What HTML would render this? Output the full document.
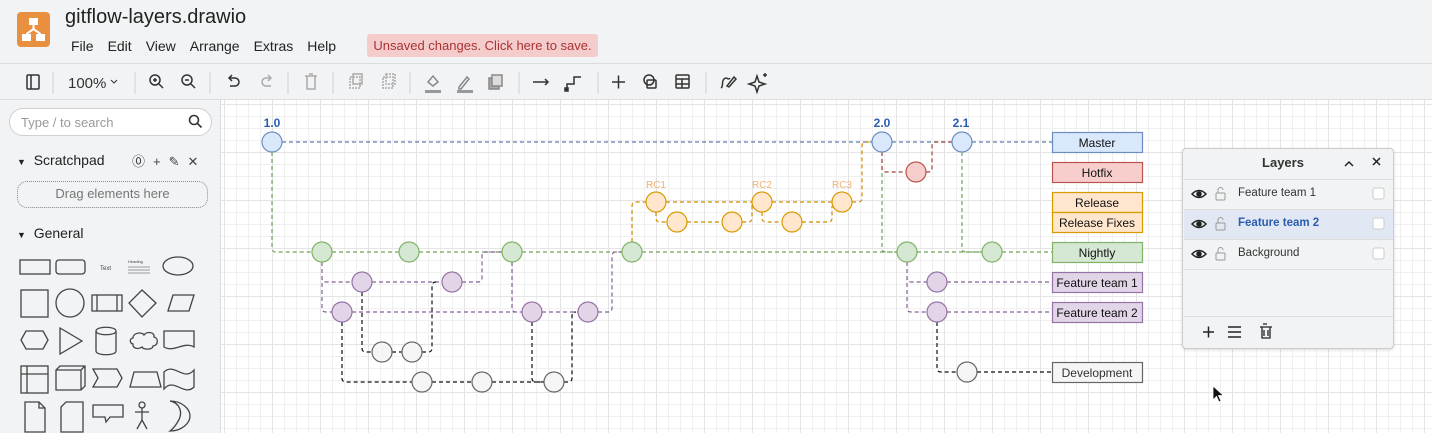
<!DOCTYPE html>
<html><head><meta charset="utf-8">
<style>
*{box-sizing:border-box;margin:0;padding:0}
body{width:1432px;height:433px;overflow:hidden;background:#f1f3f4;font-family:"Liberation Sans",sans-serif;position:relative}
.abs{position:absolute}
.menu span{margin-right:14px;font-size:14px;color:#222}
#tb{position:absolute;left:0;top:63px;width:1432px;height:37px;border-top:1px solid #dadce0;border-bottom:1px solid #dadce0;background:#f1f3f4}
#side{position:absolute;left:0;top:100px;width:221px;height:333px;background:#f1f3f4;border-right:1px solid #dadce0}
#canvas{position:absolute;left:221px;top:100px;width:1211px;height:333px;background-color:#fff;
background-image:linear-gradient(#e4e4e4 1px,transparent 1px),linear-gradient(90deg,#e4e4e4 1px,transparent 1px),linear-gradient(#f0f0f0 1px,transparent 1px),linear-gradient(90deg,#f0f0f0 1px,transparent 1px);
background-size:48px 48px,48px 48px,12px 12px,12px 12px;background-position:-5px 4px,3px 0,-5px 4px,3px 0}
</style></head><body>
<div class="abs" style="left:17px;top:12px;width:33px;height:35px;background:#e8903f;border-radius:4px">
<svg width="33" height="35" viewBox="0 0 33 35"><g fill="#fff"><rect x="12" y="6" width="9" height="7"/><rect x="5" y="22" width="9" height="7"/><rect x="19" y="22" width="9" height="7"/></g><path d="M16.5 13v4M9.5 22l7-5 7 5" stroke="#fff" stroke-width="2" fill="none"/></svg></div>
<div class="abs" style="left:65px;top:6px;font-size:20px;color:#222">gitflow-layers.drawio</div>
<div class="abs menu" style="left:71px;top:38px"><span>File</span><span>Edit</span><span>View</span><span>Arrange</span><span>Extras</span><span>Help</span></div>
<div class="abs" style="left:367px;top:34px;width:231px;height:23px;background:#f4cccc;border-radius:3px;color:#a33;font-size:13px;line-height:23px;text-align:center">Unsaved changes. Click here to save.</div>
<div id="tb">
<svg width="800" height="37" style="position:absolute;left:0;top:0" fill="none" stroke="#333" stroke-width="1.5">
<rect x="27" y="11" width="12" height="14" rx="1"/><line x1="31" y1="11" x2="31" y2="25"/>
<line x1="53" y1="8" x2="53" y2="30" stroke="#ddd"/>
<text x="68" y="24" font-size="15" fill="#333" stroke="none" font-family="Liberation Sans">100%</text><path d="M111 16l3 3 3-3" stroke-width="1"/>
<line x1="135" y1="8" x2="135" y2="30" stroke="#ddd"/>
<circle cx="155" cy="16" r="5"/><path d="M159 20l4 4M153 16h4M155 14v4"/>
<circle cx="187" cy="16" r="5"/><path d="M191 20l4 4M185 16h4"/>
<line x1="210" y1="8" x2="210" y2="30" stroke="#ddd"/>
<path d="M229 14h6a4 4 0 010 8h-5M232 11l-3 3 3 3"/>
<path d="M271 14h-5a4 4 0 000 8h5M268 11l3 3-3 3" stroke="#aaa"/>
<line x1="288" y1="8" x2="288" y2="30" stroke="#ddd"/>
<path d="M305 12h12M307 12v13h8V12M309 10h4" stroke="#aaa"/>
<line x1="333" y1="8" x2="333" y2="30" stroke="#ddd"/>
<rect x="350" y="13" width="10" height="11" stroke="#aaa" stroke-dasharray="2 1"/><rect x="353" y="10" width="9" height="10" stroke="#aaa"/>
<rect x="383" y="13" width="10" height="11" stroke="#aaa" stroke-dasharray="2 1"/><rect x="386" y="10" width="9" height="10" stroke="#aaa" stroke-dasharray="2 1"/>
<line x1="410" y1="8" x2="410" y2="30" stroke="#ddd"/>
<path d="M428 18l5-6 5 6-5 4z" stroke="#888"/><rect x="425" y="26" width="16" height="3" fill="#999" stroke="none"/>
<path d="M459 23l8-10 2 2-8 10h-2z" stroke="#888"/><rect x="457" y="26" width="16" height="3" fill="#999" stroke="none"/>
<rect x="489" y="14" width="10" height="11" fill="#aaa" stroke="#888"/><rect x="492" y="11" width="10" height="11" fill="#ddd" stroke="#888"/>
<line x1="519" y1="8" x2="519" y2="30" stroke="#ddd"/>
<path d="M533 18h15M545 15l3 3-3 3"/>
<path d="M567 25v-5h7v-7h7"/><rect x="565" y="24" width="3" height="3" fill="#333"/>
<line x1="598" y1="8" x2="598" y2="30" stroke="#ddd"/>
<path d="M612 18h13M618.5 11.5v13"/>
<circle cx="649" cy="16" r="5"/><rect x="647" y="16" width="9" height="8" rx="1"/>
<rect x="676" y="11" width="13" height="13" rx="1"/><path d="M676 15h13M676 20h13M682 15v9"/>
<line x1="706" y1="8" x2="706" y2="30" stroke="#ddd"/>
<path d="M721 24c3-2 0-6 3-9s4 2 6-1M727 22l7-9 2 2-7 8z"/>
<path d="M757 12l2 6 6 2-6 2-2 6-2-6-6-2 6-2zM765 9v4M763 11h4"/>
</svg></div>
<div id="side">
<div class="abs" style="left:9px;top:8px;width:203px;height:28px;border:1px solid #d0d0d0;border-radius:14px;background:#fff;font-size:13px;color:#999;padding:6px 0 0 11px">Type / to search</div>
<svg class="abs" style="left:188px;top:14px" width="16" height="16" fill="none" stroke="#333" stroke-width="1.6"><circle cx="6" cy="6" r="4.5"/><path d="M9.5 9.5l4 4"/></svg>
<div class="abs" style="left:17px;top:52px;font-size:14px;color:#222"><span style="font-size:9px">▼</span>&nbsp; Scratchpad</div>
<div class="abs" style="left:132px;top:51px;font-size:13px;color:#444;letter-spacing:8px">⓪+✎✕</div>
<div class="abs" style="left:17px;top:81px;width:191px;height:27px;border:1.5px dotted #888;border-radius:10px;font-size:13px;color:#777;text-align:center;line-height:24px">Drag elements here</div>
<div class="abs" style="left:17px;top:125px;font-size:14px;color:#222"><span style="font-size:9px">▼</span>&nbsp; General</div>
<svg class="abs" style="left:18px;top:155px" width="200" height="178" fill="none" stroke="#444" stroke-width="1.3">
<rect x="2" y="5" width="30" height="14"/><rect x="38" y="5" width="29" height="14" rx="3"/>
<text x="82" y="15" font-size="6" fill="#444" stroke="none">Text</text>
<text x="110" y="8" font-size="4" fill="#444" stroke="none">Heading</text><path d="M110 12h22M110 15h22M110 18h22" stroke-width=".6"/>
<ellipse cx="160" cy="11" rx="15" ry="9"/>
<rect x="3" y="35" width="27" height="27"/><circle cx="52" cy="48" r="14"/><rect x="74" y="40" width="30" height="16"/><path d="M79 40v16M99 40v16"/>
<path d="M124 35l14 13-14 14-13-14z"/><path d="M150 56l5-16h21l-5 16z"/>
<path d="M3 85l5-9h17l5 9-5 9H8z"/><path d="M42 73l22 13-22 13z"/><path d="M78 76c0-5 20-5 20 0v20c0 5-20 5-20 0zM78 76c0 5 20 5 20 0"/>
<path d="M115 83c0-6 10-6 11-3 3-4 11-3 10 2 5 1 4 9-1 9 0 4-10 4-11 1-4 3-10 1-9-3-4-1-3-6 0-6z"/><path d="M146 76h30v16c-10-6-20 6-30 0z"/>
<rect x="3" y="111" width="27" height="27"/><path d="M3 119h27M9 111v27"/><path d="M38 115l4-4h25v20l-4 4H38zM38 115h25v20M63 115l4-4"/>
<path d="M75 114h24l5 9-5 9H75l5-9z"/><path d="M112 132l4-15h23l4 15z"/><path d="M146 117c10-10 20 10 30-2v17c-10 10-20-10-30 2z"/>
<path d="M7 147h14l6 6v24H7zM21 147v6h6"/><path d="M48 147h17v30H43v-25z"/><path d="M75 150h30v12H92l-4 5-1-5H75z"/>
<circle cx="124" cy="150" r="3"/><path d="M124 153v12M117 157h14M124 165l-5 9M124 165l5 9"/>
<path d="M152 146c10 2 14 12 7 22-3 5-7 8-7 8 12 0 20-8 20-15s-8-15-20-15z"/>
</svg>
</div>
<div id="canvas"></div>
<svg class="abs" style="left:0;top:0" width="1432" height="433" font-family="Liberation Sans">
<g fill="none" stroke-width="1.2" stroke-dasharray="4 3">
<path d="M282 142H872M892 142H952M972 142H1052" stroke="#5a7ab0"/>
<path d="M272 152V248q0 4 4 4H312M332 252H399M419 252H502M522 252H622M642 252H897M917 252H982M1002 252H1052M882 152V248q0 4 4 4H897M962 152V248q0 4 4 4H982" stroke="#6fa45a"/>
<path d="M632 242V206q0-4 4-4H646M666 202H752M772 202H832M852 202H858q4 0 4-4V146q0-4 4-4H872M656 212V218q0 4 4 4H667M687 222H722M742 222H748q4 0 4-4V206q0-4 4-4M762 212V218q0 4 4 4H782M802 222H828q4 0 4-4V206" stroke="#d08a00"/>
<path d="M882 152V168q0 4 4 4H906M926 172H928q4 0 4-4V146q0-4 4-4H952" stroke="#a84440"/>
<path d="M322 262V278q0 4 4 4H352M372 282H442M462 282H478q4 0 4-4V256q0-4 4-4H502M322 262V308q0 4 4 4H332M352 312H522M542 312H578M598 312H608q4 0 4-4V256q0-4 4-4H622M512 262V308q0 4 4 4H522M907 262V278q0 4 4 4H927M907 262V308q0 4 4 4H927M947 282H1052M947 312H1052" stroke="#86609a"/>
<path d="M362 292V348q0 4 4 4H372M392 352H402M422 352H428q4 0 4-4V286q0-4 4-4M342 322V378q0 4 4 4H412M432 382H472M492 382H544M564 382H568q4 0 4-4V316q0-4 4-4M532 322V378q0 4 4 4H544M937 322V368q0 4 4 4H957M977 372H1052" stroke="#111"/>
</g>
<g stroke-width="1.2">
<g fill="#dae8fc" stroke="#6c8ebf"><circle cx="272" cy="142" r="10"/><circle cx="882" cy="142" r="10"/><circle cx="962" cy="142" r="10"/><rect x="1052.5" y="132.5" width="90" height="20"/></g>
<g fill="#f8cecc" stroke="#b85450"><circle cx="916" cy="172" r="10"/><rect x="1052.5" y="162.5" width="90" height="20"/></g>
<g fill="#ffe6cc" stroke="#d79b00"><circle cx="656" cy="202" r="10"/><circle cx="762" cy="202" r="10"/><circle cx="842" cy="202" r="10"/><circle cx="677" cy="222" r="10"/><circle cx="732" cy="222" r="10"/><circle cx="792" cy="222" r="10"/><rect x="1052.5" y="192.5" width="90" height="20"/><rect x="1052.5" y="212.5" width="90" height="20"/></g>
<g fill="#d5e8d4" stroke="#82b366"><circle cx="322" cy="252" r="10"/><circle cx="409" cy="252" r="10"/><circle cx="512" cy="252" r="10"/><circle cx="632" cy="252" r="10"/><circle cx="907" cy="252" r="10"/><circle cx="992" cy="252" r="10"/><rect x="1052.5" y="242.5" width="90" height="20"/></g>
<g fill="#e1d5e7" stroke="#9673a6"><circle cx="362" cy="282" r="10"/><circle cx="452" cy="282" r="10"/><circle cx="937" cy="282" r="10"/><circle cx="342" cy="312" r="10"/><circle cx="532" cy="312" r="10"/><circle cx="588" cy="312" r="10"/><circle cx="937" cy="312" r="10"/><rect x="1052.5" y="272.5" width="90" height="20"/><rect x="1052.5" y="302.5" width="90" height="20"/></g>
<g fill="#f5f5f5" stroke="#666"><circle cx="382" cy="352" r="10"/><circle cx="412" cy="352" r="10"/><circle cx="422" cy="382" r="10"/><circle cx="482" cy="382" r="10"/><circle cx="554" cy="382" r="10"/><circle cx="967" cy="372" r="10"/><rect x="1052.5" y="362.5" width="90" height="20"/></g>
</g>
<g font-size="12" fill="#111" text-anchor="middle">
<text x="1097" y="147">Master</text><text x="1097" y="177">Hotfix</text><text x="1097" y="207">Release</text><text x="1097" y="227">Release Fixes</text><text x="1097" y="257">Nightly</text><text x="1097" y="287">Feature team 1</text><text x="1097" y="317">Feature team 2</text><text x="1097" y="377" fill="#333">Development</text>
</g>
<g font-size="12" font-weight="bold" fill="#2a5db0" text-anchor="middle"><text x="272" y="127">1.0</text><text x="882" y="127">2.0</text><text x="961" y="127">2.1</text></g>
<g font-size="10" fill="#f0b070" text-anchor="middle"><text x="656" y="188">RC1</text><text x="762" y="188">RC2</text><text x="842" y="188">RC3</text></g>
<path d="M1213 386v14l3.5-3.5 2.5 5.5 2-1-2.5-5.5h5z" fill="#111" stroke="#fff" stroke-width=".8"/>
</svg>
<div class="abs" style="left:1182px;top:148px;width:212px;height:201px;background:#f1f3f4;border:1px solid #ccc;border-radius:4px;box-shadow:0 1px 3px rgba(0,0,0,.15)">
<div class="abs" style="left:0;top:6px;width:200px;text-align:center;font-size:13px;font-weight:bold;color:#333">Layers</div>
<div class="abs" style="left:1px;top:30px;width:209px;height:1px;background:#ddd"></div>
<div class="abs" style="left:1px;top:60px;width:209px;height:30px;background:#e2e8f3"></div>
<div class="abs" style="left:1px;top:90px;width:209px;height:1px;background:#ddd"></div>
<div class="abs" style="left:1px;top:60px;width:209px;height:1px;background:#ddd"></div>
<div class="abs" style="left:1px;top:120px;width:209px;height:1px;background:#ddd"></div>
<div class="abs" style="left:1px;top:167px;width:209px;height:1px;background:#ddd"></div>
<div class="abs" style="left:55px;top:38px;font-size:11.5px;color:#333">Feature team 1</div>
<div class="abs" style="left:55px;top:68px;font-size:11.5px;color:#2a5db0;font-weight:bold">Feature team 2</div>
<div class="abs" style="left:55px;top:98px;font-size:11.5px;color:#333">Background</div>
<svg class="abs" style="left:0;top:0" width="212" height="200" fill="none" stroke="#222" stroke-width="1.5">
<path d="M162 17l4-4 4 4M190 9l7 7M197 9l-7 7"/>
<g id="e"><path d="M9 45q7-7 14 0q-7 7-14 0z"/><circle cx="16" cy="45" r="2" fill="#222"/></g>
<use href="#e" y="30"/><use href="#e" y="60"/>
<g id="l" stroke="#999" stroke-width="1"><rect x="33" y="44" width="9" height="7" rx="1"/><path d="M35 44v-3a2.5 2.5 0 015 0"/></g>
<use href="#l" y="30"/><use href="#l" y="60"/>
<g stroke="#ccc" stroke-width="1" fill="#fff"><rect x="190" y="39" width="11" height="11" rx="2"/><rect x="190" y="69" width="11" height="11" rx="2"/><rect x="190" y="99" width="11" height="11" rx="2"/></g>
<path d="M20 183h11M25.5 177.5v11M45 178h13M45 183h13M45 188h13"/>
<path d="M77 178h12M79 178v11h8V178M80 175h4M81 181v6M85 181v6" stroke-width="1.3"/>
</svg>
</div>
</body></html>
